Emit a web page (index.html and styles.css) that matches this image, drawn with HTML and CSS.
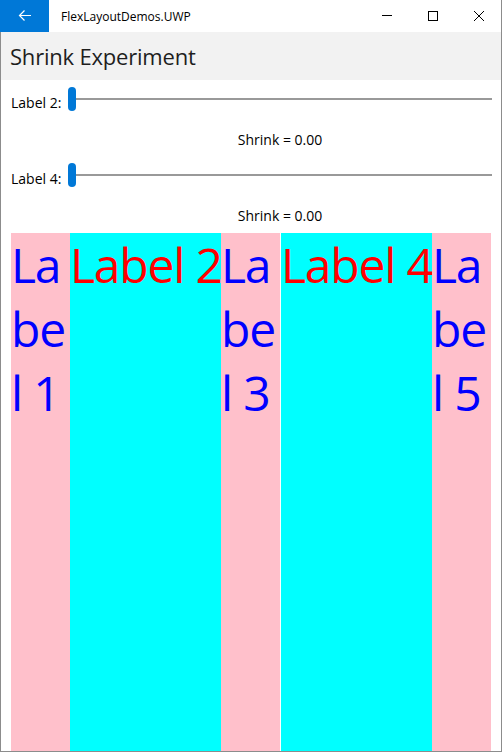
FILE: index.html
```html
<!DOCTYPE html>
<html>
<head>
<meta charset="utf-8">
<title>FlexLayoutDemos.UWP</title>
<link rel="stylesheet" href="styles.css">
</head>
<body>
<div class="window">
  <div class="titlebar">
    <div class="back">
      <svg width="48" height="32" viewBox="0 0 48 32"><path d="M31 15.5H19.5M24.5 10.5L19.5 15.5L24.5 20.5" fill="none" stroke="#fff" stroke-width="1.2"/></svg>
    </div>
    <span class="apptitle">FlexLayoutDemos.UWP</span>
    <div class="caption">
      <div class="cbtn"><svg width="46" height="32" viewBox="0 0 46 32"><path d="M18 15.5H28" stroke="#000" stroke-width="1"/></svg></div>
      <div class="cbtn"><svg width="46" height="32" viewBox="0 0 46 32"><rect x="18.5" y="11.5" width="9" height="9" fill="none" stroke="#000" stroke-width="1"/></svg></div>
      <div class="cbtn"><svg width="46" height="32" viewBox="0 0 46 32"><path d="M18 11L28 21M28 11L18 21" stroke="#000" stroke-width="1"/></svg></div>
    </div>
  </div>
  <div class="header"><h1 class="pagetitle">Shrink Experiment</h1></div>
  <div class="content">
    <div class="controls">
      <span class="slabel">Label 2:</span>
      <div class="slider"><div class="track"></div><div class="thumb"></div></div>
      <div class="value first">Shrink = 0.00</div>
      <span class="slabel second">Label 4:</span>
      <div class="slider second"><div class="track"></div><div class="thumb"></div></div>
      <div class="value">Shrink = 0.00</div>
    </div>
    <div class="flex">
      <div class="item pink">Label 1</div>
      <div class="item cyan">Label 2</div>
      <div class="item pink">Label 3</div>
      <div class="item cyan gapped">Label 4</div>
      <div class="item pink">Label 5</div>
    </div>
  </div>
</div>
</body>
</html>
```
FILE: styles.css
```css
* { box-sizing: border-box; }
html, body { margin: 0; padding: 0; }
body {
  width: 502px;
  height: 752px;
  font-family: "Open Sans", "Noto Sans", sans-serif;
  color: #000;
  background: #fff;
  overflow: hidden;
}
.window {
  width: 502px;
  height: 752px;
  border: 1px solid #8c8c8c;
  border-top: none;
  display: flex;
  flex-direction: column;
}
.titlebar {
  height: 32px;
  display: flex;
  align-items: center;
  flex: 0 0 auto;
  margin-left: -1px;
}
.back {
  width: 49px;
  height: 32px;
  background: #0078d7;
  display: flex;
}
.apptitle {
  margin-left: 12px;
  font-size: 12px;
  flex: 1;
}
.caption { display: flex; margin-right: -1px; }
.cbtn { width: 46px; height: 32px; display: flex; }
.header {
  height: 48px;
  background: #f2f2f2;
  display: flex;
  align-items: center;
  padding-left: 9px;
}
.pagetitle {
  margin: 0;
  font-size: 22px;
  font-weight: 400;
  color: #1e1e1e;
  letter-spacing: -0.2px;
}
.content {
  flex: 1;
  display: flex;
  flex-direction: column;
  padding: 7px 9px 0 10px;
}
.controls {
  display: grid;
  grid-template-columns: 57px 1fr;
  font-size: 14px;
}
.slabel {
  grid-column: 1;
  align-self: center;
  padding-top: 7px;
  line-height: 16px;
}
.slider {
  grid-column: 2;
  height: 24px;
  position: relative;
  display: flex;
  align-items: center;
}
.slider.second, .slabel.second { margin-top: 13px; }
.track {
  flex: 1;
  height: 2px;
  background: #999;
  margin-top: -1px;
}
.thumb {
  position: absolute;
  left: 0;
  top: 0;
  width: 8px;
  height: 24px;
  border-radius: 4px;
  background: #0078d7;
}
.value {
  grid-column: 2;
  text-align: center;
  line-height: 20px;
  margin-top: 19px;
}
.flex {
  margin-top: 7px;
  flex: 1;
  display: flex;
}
.item {
  font-size: 48px;
  line-height: 64px;
  word-break: break-all;
  letter-spacing: -1.2px;
  padding-top: 0;
}
.pink { background: #ffc0cb; color: #0000ff; width: 59px; }
.cyan { background: #00ffff; color: #ff0000; width: 151px; white-space: nowrap; }
.gapped { margin-left: 1px; }
```
